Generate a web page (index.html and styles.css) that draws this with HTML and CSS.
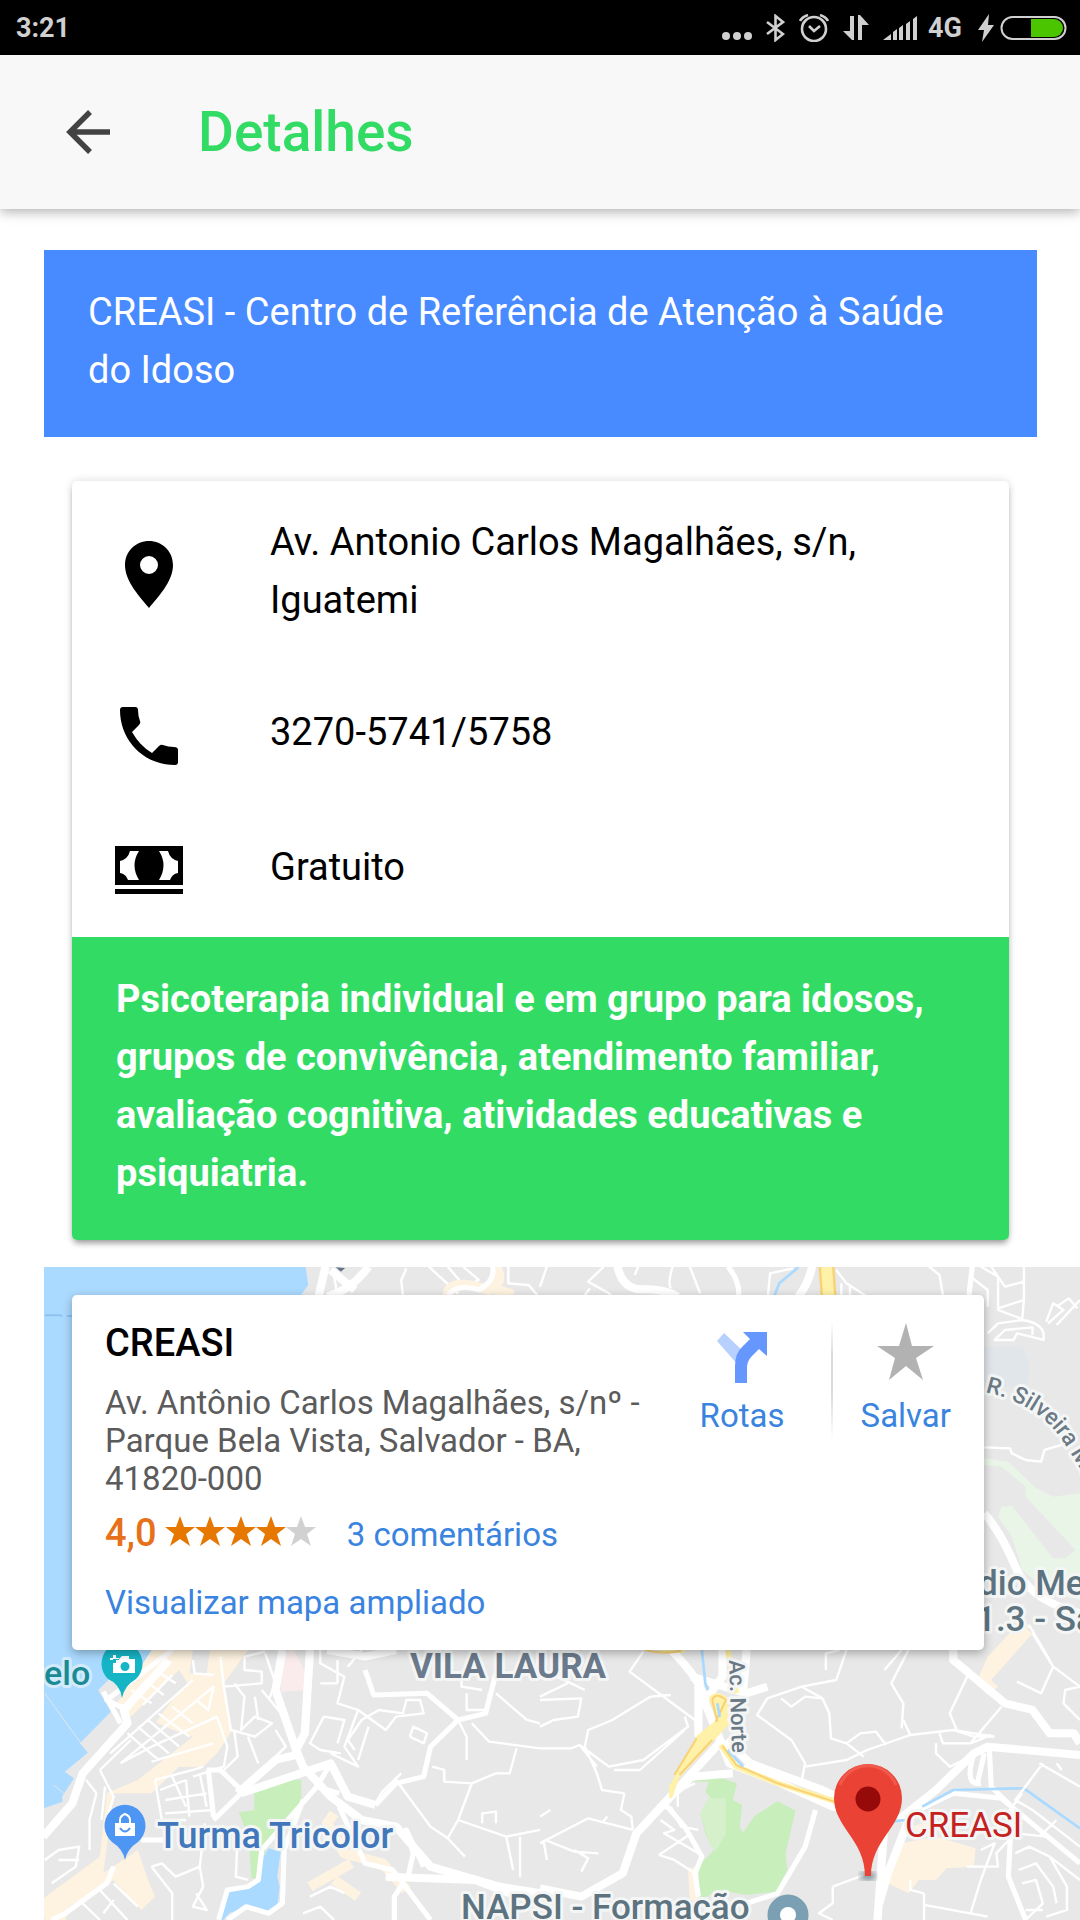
FILE: index.html
```html
<!DOCTYPE html>
<html lang="pt-BR">
<head>
<meta charset="utf-8">
<meta name="viewport" content="width=device-width, initial-scale=1">
<title>Detalhes</title>
<link rel="stylesheet" href="styles.css">
</head>
<body>
<div class="status-bar">
  <span class="status-text">3:21</span>
  <div class="status-icons">
    <svg width="30" height="28" viewBox="0 0 30 28" fill="currentColor"><circle cx="4" cy="22" r="4"/><circle cx="15" cy="22" r="4"/><circle cx="26" cy="22" r="4"/></svg>
    <svg width="19" height="28" viewBox="0 0 19 28" fill="none" stroke="currentColor" stroke-width="2.6"><path d="M1 8l16 12-7.500 6V2L17 8 1 20"/></svg>
    <svg width="30" height="28" viewBox="0 0 30 28" fill="none" stroke="currentColor" stroke-width="2.6"><circle cx="15" cy="15" r="12"/><path d="M10 12l5 5 6-5M1 7q2-4 8-6M29 7q-2-4-8-6"/></svg>
    <svg width="26" height="28" viewBox="0 0 26 28" fill="currentColor"><path d="M7 2h4v24H9L0 17h7zM15 26h4V11h7L17 1h-2z"/></svg>
    <svg width="34" height="28" viewBox="0 0 34 28" fill="currentColor"><path d="M0 26l8-6v6zM10 18l4-3v11h-4zM16 14l4-3v15h-4zM23 10l4-3v19h-4zM30 5l4-3v24h-4z"/></svg>
    <span class="status-text network">4G</span>
    <svg width="16" height="28" viewBox="0 0 16 28" fill="currentColor"><path d="M11 0L0 16h6L4 28 16 11h-6z"/></svg>
    <svg class="battery" width="67" height="28" viewBox="0 0 67 28"><rect x="1.500" y="3" width="64" height="22" rx="11" fill="none" stroke="currentColor" stroke-width="2"/><path d="M31 5h23a9 9 0 0 1 0 18H31z" fill="#4bc500"/></svg>
  </div>
</div>

<header class="toolbar">
  <button class="back" type="button" aria-label="Voltar">
    <svg width="44" height="44" viewBox="0 0 44 44" fill="none" stroke="#424242" stroke-width="5.500"><path d="M44 22H4M24 2L4 22l20 20"/></svg>
  </button>
  <h1>Detalhes</h1>
</header>

<main>
  <h2 class="place-name">CREASI - Centro de Referência de Atenção à Saúde do Idoso</h2>

  <section class="card">
    <ul class="facts">
      <li>
        <svg width="66" height="68" viewBox="0 0 66 68"><path fill-rule="evenodd" d="M33 1C20 1 9 11 9 25c0 17 16 33 24 43 8-10 24-26 24-43C57 11 46 1 33 1zm0 33a9 9 0 1 1 0-18 9 9 0 0 1 0 18z"/></svg>
        <span>Av. Antonio Carlos Magalhães, s/n, Iguatemi</span>
      </li>
      <li>
        <svg width="66" height="68" viewBox="0 0 66 68"><path d="M7 6h12q3 0 3 3 0 6 2 11 1 2-1 4l-7 7q8 14 20 21l7-7q2-2 4-1 5 2 11 2 4 0 4 3v12q0 3-3 3C27 64 4 39 4 9q0-3 3-3z"/></svg>
        <span>3270-5741/5758</span>
      </li>
      <li>
        <svg width="68" height="48" viewBox="0 0 68 48"><path fill-rule="evenodd" d="M0 0h68v39H0zM15 5h9q-9 14 0 29H13q-2-6-8-7V15q8-2 10-10zM44 5h9q2 8 10 10v12q-6 1-8 7H44q9-15 0-29zM0 43h68v5H0z"/></svg>
        <span>Gratuito</span>
      </li>
    </ul>
    <p class="services">Psicoterapia individual e em grupo para idosos, grupos de convivência, atendimento familiar, avaliação cognitiva, atividades educativas e psiquiatria.</p>
  </section>

  <section class="map" aria-label="Mapa">
    <svg class="map-canvas" viewBox="44 1267 1036 653" preserveAspectRatio="xMinYMin slice">
      <defs>
        <path id="silveira" d="M985 1392Q1038 1404 1062 1440T1096 1500"/>
        <filter id="soft"><feGaussianBlur stdDeviation="3"/></filter>
      </defs>
      <rect x="44" y="1267" width="1036" height="653" fill="#e8e8e8"/>

      <!-- north-west: bay and coast -->
      <g transform="translate(0 1240) scale(.3444 .3333)" class="tile">
        <path class="water" d="M100 70H886L895 135 870 170 600 500 500 1300H100z"/>
        <path class="dash" d="M130 226h46l4 3M194 228h30"/>
        <path class="road l" d="M945 80L925 170M1070 80Q1020 150 950 170M960 90L1030 150"/>
        <path class="road s" d="M970 110L980 165M1180 85L1165 120 1170 170M1245 80L1330 160M1300 80L1350 140 1390 120 1345 80M1476 80V130L1535 135 1560 165"/>
        <path class="sand-road" d="M1440 80Q1465 130 1420 150 1300 110 1300 170M1430 145L1490 165"/>
        <path class="road m" d="M1430 80Q1440 120 1390 150 1330 130 1300 165"/>
        <path d="M975 82L990 95 1002 84z" fill="#65738a"/>
      </g>

      <!-- north-east: highway and neighbourhood streets -->
      <g transform="translate(540 1240) scale(.3444 .3333)" class="tile">
        <path class="road l" d="M225 80Q240 150 300 148T400 170M790 80Q780 130 750 170"/>
        <path class="road m" d="M545 80Q580 120 577 170M1255 80L1245 170"/>
        <path class="road s" d="M20 80L0 140M185 80L140 125 200 160 210 170M130 165L145 145M285 80L275 105M385 80Q370 130 380 145M435 80L465 160M735 85L668 100 662 165M860 90L890 130 950 170M875 165V130M900 170V140M1130 80L1160 105 1170 165M1280 80L1330 110V210L1395 235M1250 110L1300 150V200M1310 80L1350 140 1405 125M1405 80V180L1330 205M1405 180L1400 240 1330 250 1300 280M1400 240Q1470 250 1462 300L1425 290 1385 280 1375 300H1320L1350 270 1430 262 1430 285M1470 245L1490 190 1520 210 1475 250M1500 200L1535 175 1560 205M1568 180L1500 255"/>
        <path class="river" d="M750 82L695 130 680 168"/>
        <path class="highway-edge" d="M832 80L838 170"/><path class="highway" d="M832 80L838 170"/>
        <path d="M1280 320H1400Q1430 370 1415 440H1280z" fill="#e1e6ea"/>
        <path class="park pale" d="M1290 655L1360 665 1440 745 1490 770 1568 760V1080L1480 1060 1400 990 1370 890 1330 830 1340 800 1370 797 1490 955 1525 955 1555 930 1410 770V740L1340 680 1290 675z"/>
        <path class="road s" d="M1290 622L1365 625 1370 640 1410 660 1455 665 1465 630 1530 610"/>
        <path class="road l" d="M1290 820Q1340 880 1380 980T1568 1120"/>
        <path class="sand" d="M1425 1155L1350 1260H1310L1400 1150z"/>
        <path class="road s" d="M1420 1155L1480 1260"/>
      </g>

      <!-- south-west: waterfront and old town -->
      <g transform="translate(0 1620) scale(.3444 .3333)" class="tile">
        <path class="water" d="M100 0H300L315 180 285 210 322 275 232 370 255 398 188 455 215 475 180 530 182 545 100 575z"/>
        <path class="pier" d="M130 220L200 320 235 370M155 495L185 520"/>
        <path class="sand" d="M440 90H720L650 190 675 330 630 400 590 440H520L440 520H330L300 760 400 690 430 780 450 830 410 870 330 780 200 860 190 900H130L120 840 290 710 310 520 400 480 560 350 450 310 500 240 545 190 520 150 470 200 380 290 340 250z"/>
        <path class="land" d="M560 90H610L600 160 550 160zM330 330L400 280 540 350 450 430 330 500zM335 540L440 520 590 440 600 600 440 650 330 640z"/>
        <path class="pink" d="M820 110L850 80 888 160 885 210 815 215z"/>
        <path class="park" d="M738 520L835 478 875 480V540L850 590 780 660 770 700 745 775H730L725 700 710 620 693 577 738 570z"/>
        <path class="water" d="M780 685L815 695 805 770 812 800 805 860 775 872 715 860 665 880 640 910H630L650 820 730 800 755 760 760 720z"/>
        <path class="sand-road" d="M970 580L950 610 1000 700 1110 730 1180 810M1020 730L900 800M970 780L1040 830"/>
        <path class="road l" d="M490 120L360 270 370 310 240 460 210 550 125 650M820 90L800 210 860 390 880 440 960 530 1050 600 1150 620 1250 740 1450 800 1568 820M900 90L885 340 860 390M690 520L800 420 860 405M700 520L960 430 1010 530 1090 555M950 90L1060 110 1150 90"/>
        <path class="road m" d="M1090 555L1150 490 1230 470 1250 380 1330 300 1410 280 1440 160M1060 150L1085 225 1240 220 1330 300M620 600L700 520M960 430L920 500 985 520M920 500L760 690 750 780 720 800 660 810 635 900M880 540L825 690 820 850 780 880 715 860 660 900M500 90L310 240 370 270M330 740L310 790 190 880 150 900M600 450L640 450 710 520M605 450L620 590M410 660H500M985 560L1060 730 1140 750 1170 790 1145 830V900M1170 790L1250 900M1185 770L1200 700 1180 630 1230 740M300 215L350 310"/>
        <path class="road s" d="M390 230L470 150M415 255L500 165M380 210L440 250M420 180L475 225M450 150L510 190M320 400L560 180M350 430L620 200 605 270 570 240M370 340L460 420M400 320L490 400M430 300L520 380M460 280L550 350M500 260L560 310M350 430L440 380 630 290 660 380 650 440 560 470M440 425L520 400 620 370M290 450L380 360M290 450L330 530 310 600M450 480L560 450 590 440M465 510L540 480M450 480L470 600 540 600M500 470L540 560M480 540L600 520M480 580L620 570M540 480L550 590M580 460L600 560M250 480L280 520 260 600V690M305 500L295 600M560 120L565 160 620 165M640 110L650 200 760 190V155L710 150V110L770 95M650 200L670 330 740 350 790 310 740 290 700 330 710 230 680 190M740 230L750 300M680 330L690 410 650 450M720 350L750 430M840 310L800 260 760 210M780 240L800 190 770 100M800 330L830 380 800 410M930 90V130L1000 170 980 250 1040 270 1000 380 1040 440 960 400M930 190H980M980 120V190M1010 140L1050 90M940 290L900 370 930 390 990 400M940 290L1000 300 980 370M1040 270L1120 330 1150 290 1230 280 1220 240 1180 240 1170 280 1100 270 1050 300 1010 360 1030 390M1070 320L1040 420M1190 350L1230 370 1240 340 1200 320 1190 350M1330 300L1355 350V420M1370 310L1420 365 1568 385M1500 385L1480 460 1440 460 1370 490 1290 485V450L1255 440M1370 490L1330 600 1470 650 1568 630M1400 610V580L1440 575V610M1165 460L1110 515 1090 550M1150 480L1250 620 1300 655 1330 600M1300 655L1350 710M1470 650L1490 750M1510 650V770M1355 220V270H1410L1420 220M1440 220L1530 300 1568 310M1340 170V200L1400 210M130 720L170 690 230 680 220 740 150 790M170 720L230 720M440 740L500 820V900M440 740L470 730 510 770 580 740 595 610M580 740L590 800 560 860 600 870 570 820M690 640L685 770 720 780M230 840L290 900M290 810L370 900M330 790L400 860M330 840L300 880M900 830L960 800 1000 820M880 880L930 860 970 900"/>
        <path class="road l" d="M1120 770L1380 780 1480 820"/>
      </g>

      <!-- south-east: junction, park and avenue -->
      <g transform="translate(540 1620) scale(.3444 .3333)" class="tile">
        <path class="park" d="M435 485L500 465 572 490 560 540 587 555 580 620 590 638 620 590 690 543 742 572 713 700 718 750 685 815 600 825 520 810 465 840 458 740 505 690 480 640 465 580 500 540 480 515 490 485z"/>
        <path class="park mid" d="M488 535H540V640L510 695 495 680 465 580z"/>
        <path class="sand" d="M1050 670L1150 650 1265 685 1260 740 1180 745 1150 780 1100 780 1070 820 1010 790zM1390 10L1430 40 1310 180 1330 200 1300 225 1265 190 1300 110zM430 745L460 740V840H435zM1080 620L1140 600 1130 650H1070z"/>
        <path class="road l" d="M380 90Q470 180 480 250L550 430 700 490 850 560 960 570M460 350V170M530 90V170L480 240M440 170L600 220 660 200M600 90L590 210M520 370L370 540 280 640 240 760 120 830 0 805M540 360L610 430 820 510 900 550M1040 600L1150 510 1260 400 1300 380 1568 405M1000 610L980 900M1070 600L1010 760 985 850M1200 90V120L1350 250 1430 270 1480 340 1550 340 1568 370M390 520L440 470 560 460"/>
        <path class="road m" d="M1040 600L1200 520 1340 535 1568 730M1290 400L1270 490M1305 390L1310 500 1370 560 1360 770 1410 900M800 570L770 680 690 820 600 850M340 560L370 560 420 620 470 710 450 760 460 830M1260 400Q1230 500 1280 490"/>
        <path class="highway-edge thin" d="M350 90L420 90M545 90L570 220M525 375L570 440 690 490 860 545"/>
        <path class="highway" d="M460 350L520 300 495 235Q510 215 540 235L545 310 400 470 380 530 380 500z"/>
        <path class="highway-line" d="M455 355L390 465M500 360L405 465M510 305L540 240Q510 215 500 240L515 305M305 90Q360 105 410 92M530 378L570 435 690 490 855 545"/>
        <path class="river" d="M470 90L480 190 488 210M515 250L522 290M545 390L590 440M1020 605L1060 600M1110 560L1200 510 1405 505 1568 625"/>
        <path class="road s" d="M300 95L260 155 450 300M380 225L320 230 210 300 140 330 130 380 165 460 180 510 245 520M0 385H90L115 375 200 440 300 420 430 320 420 290M215 450L290 450 420 330M245 520L235 570 265 590 270 630M115 375L165 440M30 570L0 590M0 670L140 595 270 630M195 590L180 610M10 660L20 720M15 660L100 695 170 700M100 690L140 715 120 755M0 240L120 235 110 290 40 300 0 320M50 170L130 210M80 190L0 230M350 600L390 630 360 640 460 700M345 705L390 720 450 760M345 705L440 640M380 560L410 620 460 630M400 500L400 560M410 510L450 490M890 90L860 180 760 200 660 235 630 285 730 360 770 430 760 480M830 150V100L870 90M700 235L730 260 770 230 820 235 840 280 845 355 890 370 930 340 975 335 1005 375M760 200L820 235M770 440L890 420 950 390 1075 345 1200 330 1260 350 1320 350M890 370L940 410M1050 90L1000 150M1070 90L1020 190 1055 250 1050 325M1055 300L1075 345M1245 160L1190 280 1210 330M1160 340L1170 370 1250 370 1310 345M1150 370V400L1190 440 1230 420M1200 330L1320 350M1340 260L1250 370M1430 40L1490 140 1455 220 1385 185M1490 140L1568 200 1525 210 1520 250 1568 300M1460 430L1380 540 1430 570 1568 680M1450 430L1568 500M1400 520L1350 590M1500 600L1450 650M1500 430L1515 450M850 800L940 765M850 800V850L810 880 850 900M1115 820L1075 810V780M1115 820V900M1115 855L1250 880M1280 690L1320 670 1280 780 1250 880 1300 890M1240 740H1330L1325 700 1380 640 1470 650M1380 700L1420 680 1480 710 1530 800V870L1470 890M1390 750L1440 730 1490 800 1500 850M1400 790L1440 780 1460 850 1410 900M1410 870L1460 870M1480 710L1568 780"/>
      </g>

      <!-- place labels -->
      <g class="labels">
        <text class="teal" x="44" y="1685" font-size="34">elo</text>
        <text class="area" x="410" y="1678" font-size="35">VILA LAURA</text>
        <text class="blue" x="157" y="1848" font-size="36">Turma Tricolor</text>
        <text x="461" y="1919" font-size="35">NAPSI - Formação</text>
        <text x="978" y="1595" font-size="35">dio Me</text>
        <text x="976" y="1631" font-size="35">1.3 - Sa</text>
        <text class="road-name" font-size="23"><textPath href="#silveira">R. Silveira Ma</textPath></text>
        <text class="road-name" font-size="22" transform="translate(729 1660) rotate(88)">Ac. Norte</text>
        <text class="red" x="905" y="1837" font-size="35">CREASI</text>
      </g>

      <!-- pins -->
      <path d="M122 1698Q120 1684 108 1679A20.500 21 0 1 1 136 1679Q124 1686 122 1698z" fill="#16b5c6"/>
      <path fill-rule="evenodd" d="M113 1659h6l3-3h7v3h6v14h-22zM125 1662a4 4 0 1 0 0 9 4 4 0 0 0 0-9zM110 1658h3v-3h3v3h3v2h-3v3h-3v-3h-3z" fill="#fff"/>
      <path d="M125 1860Q123 1849 112 1842A20.500 21 0 1 1 138 1842Q127 1849 125 1860z" fill="#4d96f3"/>
      <path d="M115 1823h20v13h-20z" fill="#fff"/>
      <path d="M120 1823v-3q0-4 5-6 5 2 5 6v3" fill="none" stroke="#fff" stroke-width="2"/>
      <path d="M120 1828q5 7 10 0" fill="none" stroke="#4d96f3" stroke-width="2"/>
      <circle cx="788" cy="1915" r="14" fill="none" stroke="#7b9fb3" stroke-width="13"/><circle cx="788" cy="1915" r="8" fill="#fff"/>
      <ellipse cx="868" cy="1876" rx="8" ry="4" fill="#40606a" opacity=".7" filter="url(#soft)"/>
      <path d="M868 1876h-3c0-36-31-49-31-78a34 34 0 0 1 68 0c0 29-31 42-31 78z" fill="#ea4335"/>
      <path d="M840 1785a30 30 0 0 1 56 0" fill="none" stroke="#f0594c" stroke-width="3"/>
      <circle cx="868" cy="1799" r="12.500" fill="#960a0a"/>
    </svg>

    <article class="map-card">
      <div class="info">
        <h3>CREASI</h3>
        <address>Av. Antônio Carlos Magalhães, s/nº - Parque Bela Vista, Salvador - BA, 41820-000</address>
        <div class="rating">
          <span class="score">4,0</span>
          <svg width="152" height="30" viewBox="0 0 152 30" role="img" aria-label="4 de 5 estrelas">
            <defs><path id="star" d="M15 0l4 11h11l-9 7 4 12-10-7-10 7 4-12-9-7h11z"/></defs>
            <g fill="#e67700"><use href="#star"/><use href="#star" x="30"/><use href="#star" x="61"/><use href="#star" x="91"/></g><use href="#star" x="121" fill="#d1d1d1"/>
          </svg>
          <a class="reviews" href="#comentarios">3 comentários</a>
        </div>
        <a class="larger" href="#mapa">Visualizar mapa ampliado</a>
      </div>
      <a class="action" href="#rotas">
        <svg width="60" height="60" viewBox="0 0 60 60"><path d="M5 18l7-8 20 19-6 13z" fill="#b8d0fd"/><path d="M23 60V43q0-13 8-20l7-7-7-7h24v24l-8-7-7 7q-5 5-5 12v15z" fill="#6697ff"/></svg>
        Rotas
      </a>
      <span class="divider"></span>
      <button class="action" type="button">
        <svg width="60" height="60" viewBox="0 0 60 60"><path d="M30 0l6 23h22L40 35l7 22-17-14-17 14 6-22L1 23h22z" fill="#b2b2b2"/></svg>
        Salvar
      </button>
    </article>
  </section>
</main>
</body>
</html>
```
FILE: styles.css
```css
* { box-sizing: border-box; }

body {
  margin: 0;
  min-height: 100vh;
  display: flex;
  flex-direction: column;
  background: #fff;
  color: #000;
  font-family: Roboto, "Liberation Sans", sans-serif;
  font-size: 38px;
  line-height: 58px;
}

h1, h2, h3, p, ul { margin: 0; padding: 0; font-weight: 400; }
button { border: 0; padding: 0; background: none; font: inherit; }
a { text-decoration: none; }
svg { display: block; flex: none; }

/* Status bar */
.status-bar {
  display: flex;
  justify-content: space-between;
  align-items: center;
  height: 55px;
  padding: 0 13px 0 16px;
  background: #000;
  color: #d0d0d0;
}
.status-text { font-size: 27px; line-height: 32px; font-weight: 700; }
.status-icons { display: flex; align-items: center; gap: 14px; }
.network { margin: 0 2px 0 -3px; }
.battery { margin-left: -8px; }

/* Toolbar */
.toolbar {
  position: relative;
  display: flex;
  align-items: center;
  gap: 88px;
  height: 154px;
  padding: 0 66px;
  background: #f8f8f8;
  box-shadow: 0 2px 12px rgba(0, 0, 0, .35);
}
.toolbar h1 { font-size: 55px; line-height: 66px; font-weight: 500; color: #32db64; }

/* Content */
main {
  flex: 1;
  display: flex;
  flex-direction: column;
  padding: 41px 0 0 44px;
}
.place-name {
  margin-right: 43px;
  padding: 33px 44px 38px;
  background: #488aff;
  color: #fff;
  font-size: 38px;
}
.card {
  margin: 44px 71px 27px 28px;
  border-radius: 5px;
  overflow: hidden;
  background: #fff;
  box-shadow: 0 5px 6px -2px rgba(0, 0, 0, .35), 0 0 8px rgba(0, 0, 0, .15);
}
.facts { list-style: none; }
.facts li {
  display: grid;
  grid-template-columns: 66px 1fr;
  align-items: center;
  justify-items: center;
  column-gap: 88px;
  min-height: 135px;
  padding: 32px 44px;
}
.facts span { justify-self: stretch; padding-bottom: 6px; }
.services {
  padding: 33px 44px 38px;
  background: #32db64;
  color: #fff;
  font-weight: 700;
}

/* Map */
.map { position: relative; flex: 1; overflow: hidden; }
.map-canvas { position: absolute; inset: 0; width: 100%; height: 100%; }
.map-card {
  position: relative;
  display: flex;
  margin: 28px 96px 28px 28px;
  padding: 26px 33px 28px;
  border-radius: 5px;
  background: #fff;
  box-shadow: 0 3px 10px rgba(0, 0, 0, .3);
  font-size: 33px;
  line-height: 38px;
}
.info { flex: 1; padding-right: 44px; }
.info h3 { font-size: 38px; line-height: 44px; font-weight: 500; }
address { margin: 19px 0 13px; font-style: normal; color: #5b5b5b; }
.rating { display: flex; align-items: baseline; margin-bottom: 29px; }
.rating svg { margin: 0 30px 0 8px; }
.score { font-size: 38px; line-height: 44px; font-weight: 500; color: #e7711b; }
.reviews, .larger, .action { color: #3a84df; }
.larger { display: block; }
.action { display: flex; flex-direction: column; align-items: center; align-self: flex-start; padding-top: 2px; gap: 14px; }
.divider {
  width: 2px;
  height: 120px;
  margin: 0 28px 0 46px;
  background: linear-gradient(#fff, #dadada 30%, #dadada 60%, #fff);
}

/* Drawing styles for the map */
.tile path { stroke-linejoin: round; }
.water { fill: #aadaff; }
.park { fill: #c8eebc; }
.park.mid { fill: #d5f0cb; }
.park.pale { fill: #e9f5e7; }
.sand { fill: #fef3e0; }
.land { fill: #e8e8e8; }
.pink { fill: #faeced; }
.road, .sand-road, .river, .highway-edge, .highway-line, .dash, .pier { fill: none; stroke: #fff; }
.road.s { stroke-width: 7px; }
.road.m { stroke-width: 15px; }
.road.l { stroke-width: 24px; }
.sand-road { stroke: #fef3e0; stroke-width: 30px; }
.river { stroke: #aadaff; stroke-width: 8px; }
.highway { fill: #fff1a8; stroke: #fff1a8; stroke-width: 10px; }
.highway-edge { stroke: #f8d277; stroke-width: 46px; }
.highway-edge + .highway { stroke-width: 32px; }
.highway-edge.thin { stroke: #fff1a8; stroke-width: 16px; }
.highway-edge.thin + .highway { stroke-width: 10px; }
.highway-line { stroke: #f8d277; stroke-width: 6px; }
.dash { stroke: #8fc1f2; stroke-width: 6px; }
.pier { stroke: #d5e5ee; stroke-width: 3px; }

.labels text {
  font-weight: 500;
  fill: #5d7480;
  stroke: #f4f6f6;
  stroke-width: 6px;
  stroke-linejoin: round;
  paint-order: stroke;
}
.labels .area { font-weight: 700; fill: #6b7a8c; }
.labels .teal { fill: #1a8b95; stroke: #d3eafa; }
.labels .blue { fill: #4277bb; }
.labels .red { fill: #c5221f; font-weight: 400; }
.labels .road-name { fill: #6c7a86; }
```
